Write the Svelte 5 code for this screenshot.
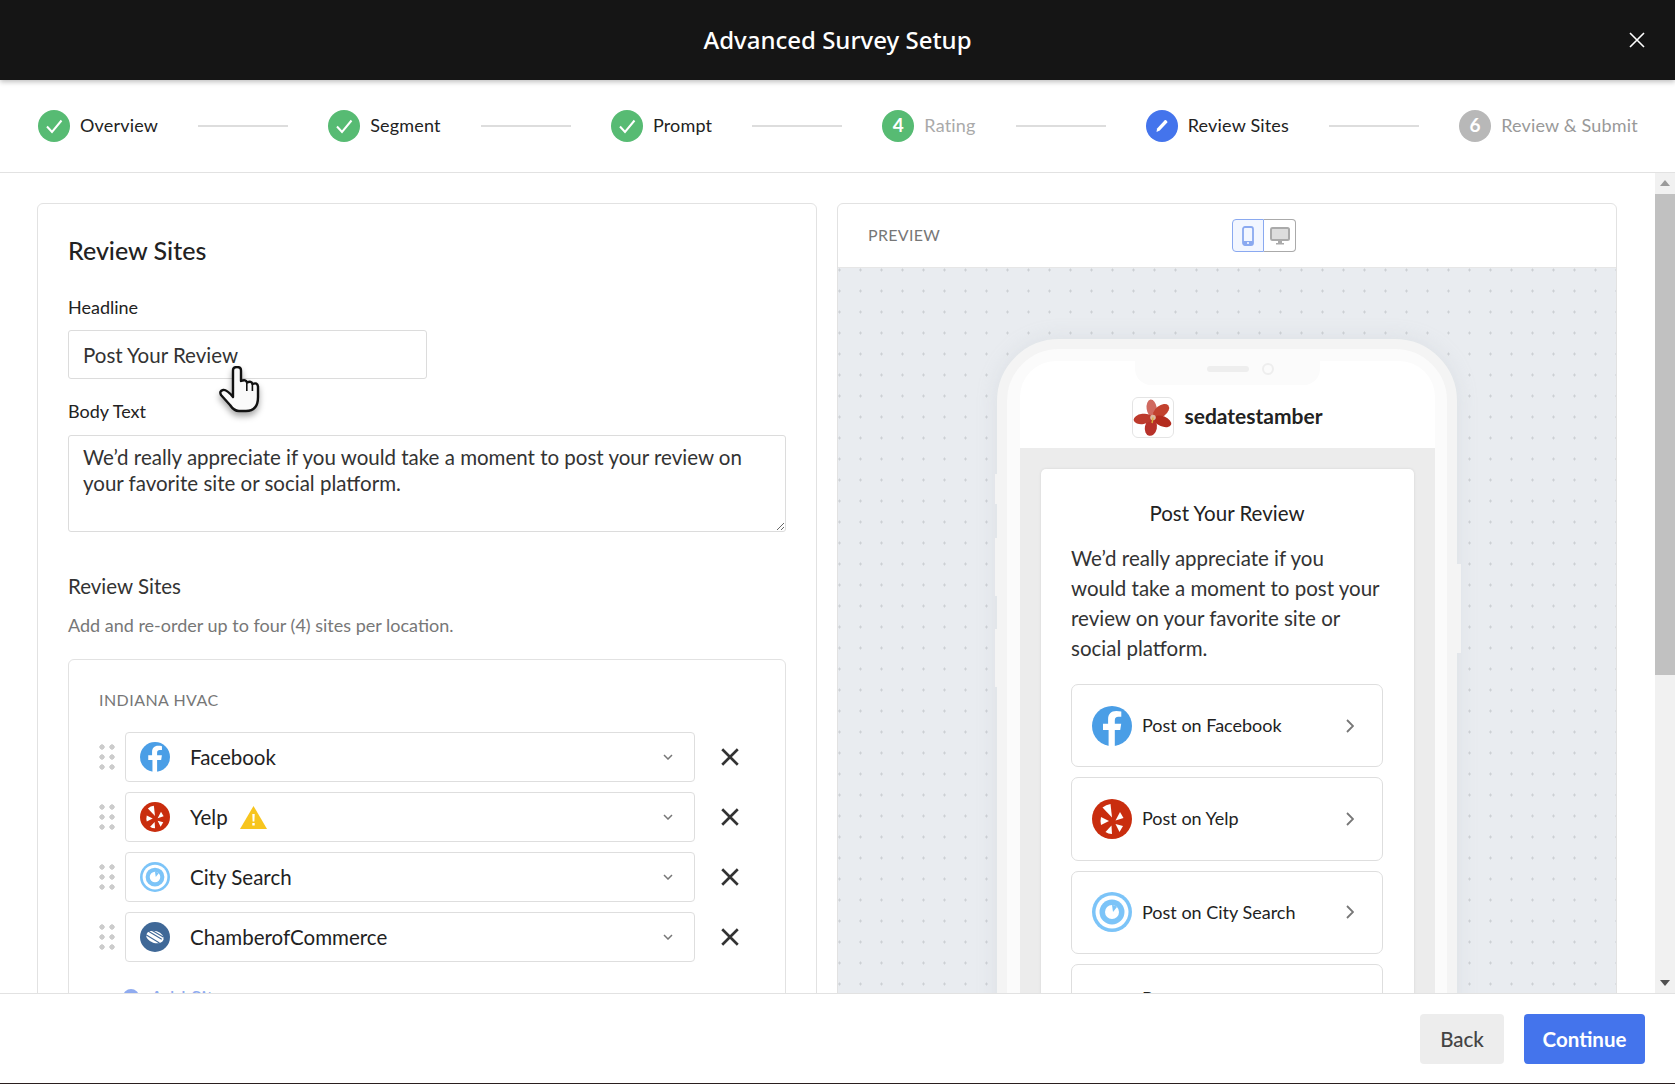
<script>
  const steps = [
    { label: 'Overview', state: 'done' },
    { label: 'Segment', state: 'done' },
    { label: 'Prompt', state: 'done' },
    { label: 'Rating', state: 'num', n: 4 },
    { label: 'Review Sites', state: 'edit' },
    { label: 'Review & Submit', state: 'todo', n: 6 }
  ];
  const sites = [
    { name: 'Facebook', kind: 'fb' },
    { name: 'Yelp', kind: 'yelp', warn: true },
    { name: 'City Search', kind: 'city' },
    { name: 'ChamberofCommerce', kind: 'coc' }
  ];
  const body = 'We’d really appreciate if you would take a moment to post your review on your favorite site or social platform.';
</script>

{#snippet siteIcon(kind)}
  <svg class="logo" viewBox="0 0 40 40" aria-hidden="true">
    {#if kind === 'fb'}
      <circle cx="20" cy="20" r="20" fill="#4a9ee6" />
      <path fill="#fff" d="M22.8 40V24h5.4l1-6.2h-6.4v-3.4c0-2.3 1.1-3.6 3.5-3.6h3V5.600c-1.600-.3-3.400-.5-5-.5-5.400 0-8.200 3.200-8.200 8.300v4.400H11V24h5.600v16z" />
    {:else if kind === 'yelp'}
      <circle cx="20" cy="20" r="20" fill="#c92d0e" />
      <g fill="#fff">
        <path d="M10.500 8.500Q14 5.500 18.500 5L20 18.500Z" />
        <path d="M28 13L31.500 19L23.500 21.500Z" />
        <path d="M23.500 25L31 27L27.500 33Z" />
        <path d="M19.500 26.500L20 35Q16 35 13.500 33Z" />
        <path d="M17 22L9 26Q8 22 9 18Z" />
      </g>
    {:else if kind === 'city'}
      <circle cx="20" cy="20" r="20" fill="#7cc4f8" />
      <circle cx="20" cy="20" r="16.500" fill="#fff" />
      <circle cx="20" cy="20" r="12.500" fill="#7cc4f8" />
      <circle cx="20" cy="20" r="7" fill="#fff" />
      <path fill="#7cc4f8" d="M20 13a7 7 0 0 1 5 2l-4 5z" />
    {:else}
      <circle cx="20" cy="20" r="20" fill="#3f6897" />
      <ellipse cx="20" cy="20" rx="12" ry="8" transform="rotate(18 20 20)" fill="#fff" />
      <path stroke="#3f6897" stroke-width="1.400" d="M9 11l20 12M14 10l17 10M8 17l18 11" />
    {/if}
  </svg>
{/snippet}

<div class="app">
  <header class="top">
    <h1>Advanced Survey Setup</h1>
    <button class="close" aria-label="Close">
      <svg viewBox="0 0 16 16"><path d="M1 1l14 14M15 1L1 15" stroke="#fff" stroke-width="1.600" fill="none" /></svg>
    </button>
  </header>

  <nav class="stepper">
    {#each steps as s, i}
      {#if i > 0}<span class="line"></span>{/if}
      <div class="step {s.state}">
        <span class="dot">
          {#if s.state === 'done'}
            <svg viewBox="0 0 32 32"><path d="M9 16.500l5 5.500 9.500-11.500" fill="none" stroke="#fff" stroke-width="2" /></svg>
          {:else if s.state === 'edit'}
            <svg viewBox="0 0 32 32"><path d="M10.500 22l.6-3.600 7.600-8.200c.8-.8 3.400 1.500 2.600 2.400l-7.500 8z" fill="#fff" /></svg>
          {:else}
            {s.n}
          {/if}
        </span>
        <span class="step-label">{s.label}</span>
      </div>
    {/each}
  </nav>

  <div class="middle">
    <main class="content">
      <section class="card form">
        <h2>Review Sites</h2>
        <label class="lbl first" for="headline">Headline</label>
        <input id="headline" class="headline" value="Post Your Review" />
        <label class="lbl second" for="bodytext">Body Text</label>
        <textarea id="bodytext" value={body}></textarea>
        <h3>Review Sites</h3>
        <p class="help">Add and re-order up to four (4) sites per location.</p>
        <div class="box">
          <div class="loc">INDIANA HVAC</div>
          <div class="rows">
            {#each sites as site}
              <div class="row">
                <span class="drag"></span>
                <div class="select">
                  {@render siteIcon(site.kind)}
                  <span class="site-name">{site.name}</span>
                  {#if site.warn}
                    <svg class="warn" viewBox="0 0 27 23">
                      <path d="M13.500 0L27 23H0z" fill="#f7c51e" />
                      <path d="M12.300 8h2.400l-.3 7.500h-1.800zM12.300 17h2.400v2.400h-2.400z" fill="#fff" />
                    </svg>
                  {/if}
                  <svg class="chev" viewBox="0 0 10 6"><path d="M1 1l4 4 4-4" fill="none" stroke="#777" stroke-width="1.500" /></svg>
                </div>
                <svg class="remove" viewBox="0 0 18 18"><path d="M2 2l14 14M16 2L2 16" stroke="#333" stroke-width="2.400" fill="none" /></svg>
              </div>
            {/each}
          </div>
          <div class="add"><span class="add-dot"></span><span>Add Site</span></div>
        </div>
      </section>

      <section class="card preview">
        <div class="pv-head">
          <span class="pv-title">PREVIEW</span>
          <div class="toggle">
            <span class="tg on">
              <svg viewBox="0 0 12 20"><rect x="1" y="1" width="10" height="18" rx="2" fill="none" stroke="#8aa9f0" stroke-width="1.800" /><rect x="1" y="15" width="10" height="4" rx="1" fill="#8aa9f0" /><circle cx="6" cy="17" r="1" fill="#fff" /></svg>
            </span>
            <span class="tg">
              <svg viewBox="0 0 20 18"><rect x="1" y="1" width="18" height="12" rx="1.500" fill="#ddd" stroke="#aaa" stroke-width="2" /><path d="M8 13h4v3h2v1.500H6V16h2z" fill="#aaa" /></svg>
            </span>
          </div>
        </div>
        <div class="canvas">
          <div class="phone">
            <span class="side l1"></span>
            <span class="side l2"></span>
            <span class="side l3"></span>
            <span class="side r1"></span>
            <div class="screen">
              <div class="notch"><span class="speaker"></span><span class="camera"></span></div>
              <div class="brand">
                <span class="brand-logo">
                  <svg viewBox="0 0 42 42">
                    <g transform="translate(21 21)">
                      <ellipse cx="0" cy="-10" rx="5.500" ry="9.500" transform="rotate(-8)" fill="#d06a60" />
                      <ellipse cx="0" cy="-11" rx="6" ry="10" transform="rotate(52)" fill="#c2412e" />
                      <ellipse cx="0" cy="-11" rx="5.500" ry="10" transform="rotate(112)" fill="#b32c1e" />
                      <ellipse cx="0" cy="-11" rx="6.500" ry="9" transform="rotate(192)" fill="#b8322a" />
                      <ellipse cx="0" cy="-11" rx="5.500" ry="10" transform="rotate(262)" fill="#bd3a2c" />
                      <circle r="3" fill="#dcb9a0" />
                      <path d="M0 0l-1 6" stroke="#d8b23a" stroke-width="1.500" />
                    </g>
                  </svg>
                </span>
                <span class="brand-name">sedatestamber</span>
              </div>
              <div class="screen-body">
                <div class="post-card">
                  <div class="post-title">Post Your Review</div>
                  <p class="post-text">{body}</p>
                  <div class="post-list">
                    {#each sites as site}
                      <div class="post-btn">
                        {@render siteIcon(site.kind)}
                        <span class="post-name">Post on {site.name}</span>
                        <svg class="go" viewBox="0 0 8 14"><path d="M1 1l6 6-6 6" fill="none" stroke="#777" stroke-width="1.800" /></svg>
                      </div>
                    {/each}
                  </div>
                </div>
              </div>
            </div>
          </div>
        </div>
      </section>
    </main>
    <div class="scrollbar">
      <span class="arrow up"></span>
      <span class="thumb"></span>
      <span class="arrow down"></span>
    </div>
  </div>

  <footer class="foot">
    <button class="btn back">Back</button>
    <button class="btn next">Continue</button>
  </footer>

  <svg class="cursor" viewBox="0 0 42 47" aria-hidden="true">
    <path d="M14 25V4.500Q14 1 18 1T22 4.500V15Q27 13 28 16.500Q32.500 14.500 33.500 18Q38.500 16 39 20.500V31Q39 45 27 45H20Q15 45 11 39L2 29Q0 25 4 24Q7.500 23 14 31Z" fill="#fafafa" stroke="#111" stroke-width="2.400" stroke-linejoin="round" />
    <path d="M27.800 16.500V25M33.400 18V25" stroke="#111" stroke-width="1.600" fill="none" />
  </svg>
</div>

<style>
  :global(body) {
    margin: 0;
    background: #2a1f1f;
    overflow: hidden;
  }
  .app {
    position: relative;
    height: 1083px;
    display: flex;
    flex-direction: column;
    background: #fff;
    overflow: hidden;
    font-family: Lato, "Noto Sans", sans-serif;
    color: #222;
  }
  .top {
    position: relative;
    flex: none;
    height: 80px;
    background: #151515;
    display: flex;
    align-items: center;
    justify-content: center;
    box-shadow: 0 2px 5px rgba(0, 0, 0, 0.25);
    z-index: 2;
  }
  h1 {
    margin: 0;
    padding-bottom: 2px;
    color: #fff;
    font-family: "Noto Sans", Lato, sans-serif;
    font-size: 24px;
    font-weight: 500;
  }
  .close {
    position: absolute;
    right: 30px;
    top: 32px;
    width: 16px;
    height: 16px;
    padding: 0;
    border: 0;
    background: none;
  }
  .close svg { display: block; }
  .stepper {
    flex: none;
    height: 92px;
    border-bottom: 1px solid #e2e2e2;
    padding: 0 37px 0 38px;
    display: flex;
    align-items: center;
  }
  .line {
    flex: 1;
    height: 2px;
    margin: 0 40px;
    background: #ddd;
  }
  .step {
    display: flex;
    align-items: center;
    gap: 10px;
    font-size: 18px;
    letter-spacing: 0.18px;
  }
  .step-label { padding-bottom: 3px; }
  .dot {
    width: 32px;
    height: 32px;
    box-sizing: border-box;
    padding-bottom: 3px;
    border-radius: 50%;
    display: flex;
    align-items: center;
    justify-content: center;
    color: #fff;
    font-weight: 700;
    font-size: 19px;
    background: #57bb73;
  }
  .done .dot, .edit .dot { padding-bottom: 0; }
  .dot svg { width: 32px; height: 32px; display: block; }
  .edit .dot { background: #4474ec; }
  .todo .dot { background: #b8b8b8; }
  .num .step-label { color: #aaa; }
  .todo .step-label { color: #999; }
  .middle {
    flex: 1;
    min-height: 0;
    display: flex;
    position: relative;
    overflow: hidden;
  }
  .content {
    flex: 1;
    min-width: 0;
    padding: 30px 38px 30px 37px;
    display: grid;
    grid-template-columns: 1fr 1fr;
    gap: 20px;
    align-items: start;
  }
  .card {
    min-width: 0;
    border: 1px solid #e2e2e2;
    border-radius: 6px;
    box-sizing: border-box;
    background: #fff;
  }
  .form { padding: 31px 30px 40px 30px; }
  h2 {
    margin: 0;
    font-size: 25px;
    line-height: 30px;
    font-weight: 500;
  }
  .lbl {
    display: block;
    font-size: 18px;
    line-height: 24px;
    color: #222;
  }
  .first { margin: 30px 0 11px; }
  .second { margin: 20px 0 12px; }
  input, textarea {
    display: block;
    box-sizing: border-box;
    border: 1px solid #dcdcdc;
    border-radius: 3px;
    font: inherit;
    font-size: 20.500px;
    color: #333;
    background: #fff;
    outline: none;
    margin: 0;
  }
  .headline {
    width: 359px;
    height: 49px;
    padding: 0 14px;
  }
  textarea {
    width: 100%;
    height: 97px;
    padding: 8px 14px;
    line-height: 26px;
  }
  h3 {
    margin: 41px 0 0;
    font-size: 20.500px;
    line-height: 26px;
    font-weight: 400;
    color: #333;
  }
  .help {
    margin: 14px 0 22px;
    font-size: 18px;
    line-height: 24px;
    color: #777;
  }
  .box {
    border: 1px solid #e2e2e2;
    border-radius: 6px;
    padding: 30px 28px 30px 28px;
  }
  .loc {
    padding-left: 2px;
    font-size: 16px;
    line-height: 20px;
    letter-spacing: 0.45px;
    color: #777;
  }
  .rows {
    margin-top: 22px;
    display: flex;
    flex-direction: column;
    gap: 10px;
  }
  .row {
    display: flex;
    align-items: center;
  }
  .drag {
    flex: none;
    width: 20px;
    height: 30px;
    margin-right: 8px;
    background: radial-gradient(circle at center, #ccc 2.400px, transparent 2.900px) 0 0 / 10px 10px;
  }
  .select {
    flex: none;
    width: 570px;
    height: 50px;
    box-sizing: border-box;
    border: 1px solid #dedede;
    border-radius: 4px;
    padding: 0 21px 0 14px;
    display: flex;
    align-items: center;
  }
  .select .logo {
    width: 30px;
    height: 30px;
    margin-right: 20px;
  }
  .logo { flex: none; display: block; }
  .site-name { font-size: 20.500px; color: #222; }
  .warn {
    width: 27px;
    height: 23px;
    margin-left: 12px;
    flex: none;
  }
  .chev {
    width: 10px;
    height: 6px;
    margin-left: auto;
    flex: none;
  }
  .remove {
    width: 20px;
    height: 20px;
    margin-left: 25px;
    flex: none;
  }
  .add {
    margin: 23px 0 0 26px;
    display: flex;
    align-items: center;
    gap: 11px;
    color: #8fabf0;
    font-size: 20px;
    line-height: 24px;
  }
  .add-dot {
    width: 16px;
    height: 16px;
    border-radius: 50%;
    background: #8fabf0;
  }
  .pv-head {
    height: 63px;
    padding-left: 30px;
    border-bottom: 1px solid #e6e6e6;
    display: flex;
    align-items: center;
  }
  .pv-title {
    width: 364px;
    padding-bottom: 2px;
    font-size: 16px;
    letter-spacing: 0.3px;
    color: #777;
  }
  .toggle { display: flex; }
  .tg {
    width: 32px;
    height: 33px;
    box-sizing: border-box;
    border: 1px solid #aaa;
    display: flex;
    align-items: center;
    justify-content: center;
  }
  .tg svg { width: 20px; height: 18px; display: block; }
  .tg.on {
    background: #f2f6ff;
    border-color: #8aa9f0;
    border-radius: 4px 0 0 4px;
  }
  .tg.on svg { width: 12px; height: 20px; }
  .tg:not(.on) {
    border-left: 0;
    border-radius: 0 4px 4px 0;
  }
  .canvas {
    padding-top: 71px;
    padding-bottom: 60px;
    display: flex;
    justify-content: center;
    background-color: #e9ecf0;
    background-image: radial-gradient(circle at center, #ccd0d4 1px, transparent 1.300px);
    background-size: 21px 21px;
    background-position: -9px -8.500px;
  }
  .phone {
    position: relative;
    width: 460px;
    box-sizing: border-box;
    padding: 12px 12px 12px 13px;
    border: 10px solid #f4f4f4;
    border-radius: 62px 62px 0 0;
    background: #fbfbfb;
    box-shadow: 0 0 20px rgba(180, 186, 194, 0.25);
  }
  .side {
    position: absolute;
    width: 4px;
    background: #f4f4f4;
  }
  .l1 { left: -12px; top: 125px; height: 30px; }
  .l2 { left: -12px; top: 189px; height: 58px; }
  .l3 { left: -12px; top: 280px; height: 58px; }
  .r1 { right: -14px; top: 215px; height: 89px; }
  .screen {
    position: relative;
    border-radius: 36px 36px 0 0;
    background: #fff;
    overflow: hidden;
  }
  .notch {
    position: absolute;
    top: 0;
    left: 115px;
    width: 185px;
    height: 24px;
    border-radius: 0 0 16px 16px;
    background: #fbfbfb;
    display: flex;
    align-items: center;
    justify-content: center;
    gap: 13px;
    padding-left: 26px;
    padding-bottom: 8px;
    box-sizing: border-box;
  }
  .speaker {
    width: 42px;
    height: 6px;
    border-radius: 3px;
    background: #eee;
  }
  .camera {
    width: 8px;
    height: 8px;
    border-radius: 50%;
    border: 2px solid #eee;
  }
  .brand {
    height: 87px;
    box-sizing: border-box;
    padding-top: 36px;
    display: flex;
    align-items: flex-start;
    justify-content: center;
    gap: 10px;
  }
  .brand-logo {
    width: 42px;
    height: 41px;
    box-sizing: border-box;
    border: 1px solid #e4e4e4;
    border-radius: 6px;
    overflow: hidden;
  }
  .brand-logo svg { display: block; width: 40px; height: 39px; }
  .brand-name {
    font-size: 21px;
    line-height: 38px;
    font-weight: 700;
    color: #222;
  }
  .screen-body {
    background: #ececec;
    padding: 21px 21px 40px;
  }
  .post-card {
    background: #fff;
    border-radius: 5px;
    padding: 30px 31px 30px 30px;
    box-shadow: 0 0 3px rgba(0, 0, 0, 0.1);
  }
  .post-title {
    font-size: 20.500px;
    line-height: 28px;
    text-align: center;
    color: #222;
  }
  .post-text {
    margin: 16px 0 21px;
    max-width: 310px;
    font-size: 20.500px;
    line-height: 30px;
    color: #333;
  }
  .post-list {
    display: flex;
    flex-direction: column;
    gap: 10px;
  }
  .post-btn {
    height: 83.300px;
    box-sizing: border-box;
    border: 1px solid #dedede;
    border-radius: 7px;
    padding: 0 28px 0 20px;
    display: flex;
    align-items: center;
  }
  .post-btn:last-child { height: 98px; }
  .post-btn .logo {
    width: 40px;
    height: 40px;
    margin-right: 10px;
  }
  .post-name {
    flex: none;
    max-width: 170px;
    font-size: 18px;
    line-height: 29px;
    color: #222;
  }
  .go {
    width: 8px;
    height: 14px;
    flex: none;
    margin-left: auto;
  }
  .scrollbar {
    flex: none;
    width: 20px;
    background: #f1f1f1;
    display: flex;
    flex-direction: column;
    align-items: stretch;
  }
  .arrow {
    flex: none;
    height: 21px;
    position: relative;
  }
  .arrow::after {
    content: "";
    position: absolute;
    left: 5px;
    border-left: 5px solid transparent;
    border-right: 5px solid transparent;
  }
  .up::after { top: 7px; border-bottom: 6px solid #9a9a9a; }
  .down { margin-top: auto; }
  .down::after { top: 8px; border-top: 6px solid #505050; }
  .thumb {
    height: 481px;
    background: #c1c1c1;
  }
  .foot {
    position: relative;
    flex: none;
    height: 90px;
    box-sizing: border-box;
    border-top: 1px solid #e2e2e2;
    background: #fff;
    padding: 20px 30px 0 0;
    display: flex;
    justify-content: flex-end;
    gap: 20px;
  }
  .btn {
    height: 50px;
    border: 0;
    border-radius: 4px;
    padding: 0;
    font: inherit;
    font-size: 20.500px;
  }
  .back {
    width: 84px;
    background: #ededed;
    color: #444;
    font-weight: 500;
  }
  .next {
    width: 121px;
    background: #4474ec;
    color: #fff;
    font-weight: 700;
  }
  .cursor {
    position: absolute;
    left: 219px;
    top: 366px;
    width: 42px;
    height: 47px;
    filter: drop-shadow(0 4px 3px rgba(0, 0, 0, 0.35));
    pointer-events: none;
  }
</style>
